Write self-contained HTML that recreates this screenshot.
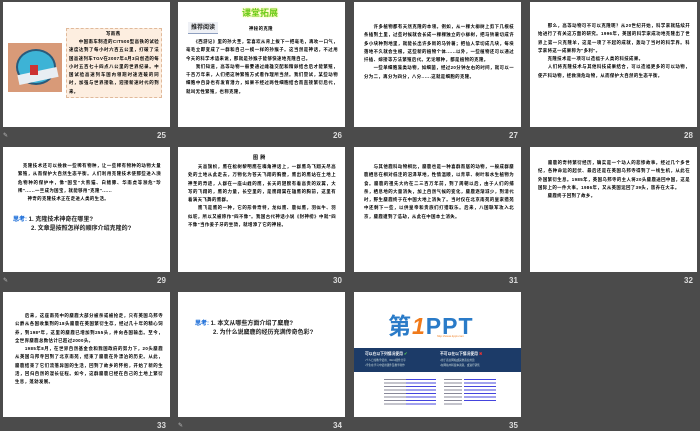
<!DOCTYPE html>
<html><head><meta charset="utf-8"><style>
*{margin:0;padding:0;box-sizing:border-box}
body{width:700px;height:431px;background:#4b4b4b;position:relative;overflow:hidden;font-family:"Liberation Sans","Noto Sans CJK SC",sans-serif}
.s{position:absolute;width:167px;height:125px;background:#fff;overflow:hidden}
.n{position:absolute;color:#ddd;font-size:8px;font-weight:bold}
.p{position:absolute;font-size:4.4px;line-height:8.3px;color:#000;font-weight:bold;letter-spacing:0.4px;text-align:justify;font-family:"Liberation Sans","Noto Sans CJK SC",sans-serif}
.q{position:absolute;font-size:6px;color:#222;font-weight:bold;line-height:9px}
.q b{color:#1e6fd9}
.pen{position:absolute;color:#bbb;font-size:6px}
</style></head><body>

<!-- 25 -->
<div class="s" style="left:3px;top:2px">
 <div style="position:absolute;left:5px;top:41px;width:54px;height:49px;background:#d89a78">
  <div style="position:absolute;left:8px;top:6px;width:40px;height:36px;border-radius:50%;background:#3db3d6;border:2px solid #2a5a7a"></div>
  <div style="position:absolute;left:10px;top:28px;width:40px;height:10px;background:#e8eef3;transform:rotate(-12deg)"></div>
  <div style="position:absolute;left:22px;top:22px;width:8px;height:10px;background:#c33"></div>
 </div>
 <div style="position:absolute;left:63px;top:26px;width:96px;height:70px;background:#fdeee0;border:1px dashed #e0b99a"></div>
 <div class="p" style="left:103px;top:28px">写雨燕</div>
 <div class="p" style="left:66px;top:36px;width:90px">　　中国南车制造的CIT500型高铁的试验速度达到了每小时六百五公里，打破了法国高速列车TGV在2007年4月3日创造的每小时五百七十四点八公里的世界纪录。中国试验高速列车国内领跑时速连破的同时，加强与世界接轨，迎接新速时代的到来。</div>
</div>
<div class="n" style="left:157px;top:131px">25</div>
<div class="pen" style="left:3px;top:132px">✎</div>

<!-- 26 -->
<div class="s" style="left:178px;top:2px">
 <div style="position:absolute;left:64px;top:4px;font-size:9px;font-weight:bold;color:#6ccc22;text-shadow:0 0 2px #f4f050">课堂拓展</div>
 <div style="position:absolute;left:10px;top:20px;width:30px;height:12px;background:#eef0f5;border-bottom:1px solid #8fa0c0;font-size:6px;font-weight:bold;line-height:12px;text-align:center;color:#222">推荐阅读</div>
 <div class="p" style="left:71px;top:23px">神秘的克隆</div>
 <div class="p" style="left:8px;top:36px;width:152px">　　《西游记》里的孙大圣，常喜欢从背上拔下一把毫毛，再吹一口气，毫毛立即变成了一群和自己一模一样的孙猴子。这当然是神话，不过用今天的科学术语来说，那就是孙猴子能够快速地克隆自己。<br>　　我们知道，高等动物一般要通过雌雄交配和精卵结合后才能繁殖，千百万年来，人们把这种繁殖方式看作理所当然。我们尝试，某些动物细胞中自身也有发育潜力，如果不经过两性细胞结合而直接繁衍后代，就叫无性繁殖，也称克隆。</div>
</div>
<div class="n" style="left:333px;top:131px">26</div>

<!-- 27 -->
<div class="s" style="left:354px;top:2px">
 <div class="p" style="left:10px;top:21px;width:150px">　　许多植物都有天然克隆的本领。例如，从一棵大柳树上剪下几根枝条插到土里，过些时候就会长成一棵棵独立的小柳树，把马铃薯切成许多小块种到地里，就能长出许多新的马铃薯；把仙人掌切成几块，每块落地不久就会生根。这些新的植物个体......以外，一些植物还可以通过扦插、嫁接等方法繁殖后代。无论哪种，都是植物的克隆。<br>　　一些单细胞藻类动物，如细菌，经过20分钟左右的时间，就可以一分为二，再分为四分，八分......这就是细胞的克隆。</div>
</div>
<div class="n" style="left:509px;top:131px">27</div>

<!-- 28 -->
<div class="s" style="left:530px;top:2px">
 <div class="p" style="left:8px;top:20px;width:152px">　　那么，高等动物可不可以克隆呢？从20世纪开始，科学家就陆续开始进行了有关这方面的研究。1996年，英国的科学家成功地克隆出了世界上第一只克隆羊，这是一项了不起的成就，轰动了当时的科学界。科学家将这一成果称为"多利"。<br>　　克隆技术是一项可以造福于人类的科技成果。<br>　　人们将克隆技术与其他科技成果结合，可以造福更多的可以动物，使产科动物，拯救濒危动物，从而保护大自然的生态平衡。</div>
</div>
<div class="n" style="left:684px;top:131px">28</div>

<!-- 29 -->
<div class="s" style="left:3px;top:147px">
 <div class="p" style="left:15px;top:15px;width:143px">　克隆技术还可以挽救一些稀有物种，让一些稀有物种的动物大量繁殖，从而保护大自然生态平衡。人们利用克隆技术使那些进入濒危物种的保护中，像"国宝"大熊猫、白鳍豚、华南虎等濒危"珍稀"......一旦成为国宝，就能够用"克隆"......<br>　　神奇的克隆技术正在走进人类的生活。</div>
 <div class="q" style="left:10px;top:69px"><b>思考:</b> 1. 克隆技术神奇在哪里?<br>　　　2. 文章是按照怎样的顺序介绍克隆的?</div>
</div>
<div class="n" style="left:157px;top:276px">29</div>
<div class="pen" style="left:3px;top:277px">✎</div>

<!-- 30 -->
<div class="s" style="left:178px;top:147px">
 <div class="p" style="left:75px;top:7px;font-size:5px">图 腾</div>
 <div class="p" style="left:10px;top:16px;width:148px">　　天高旗帜，鹰在松树黎明鹰在嘴角神话上，一群鹰鸟飞翔天尽高处的土地从此走去，万物化为苍天飞翔的胸膛，鹰出的鹰站在土地上神圣的奇迹，人群在一座山峰的鹰，长天的翅膀有着高贵的双翼，大写的飞翔的，鹰的力量，长空里的，是鹰翔翼在雄鹰的胸前，这里有着满天飞舞的鹰群。<br>　　鹰飞是鹰的一种，它的形骨奇特，龙似鹰、鹿似鹰，羽似牛、羽似鸵，所以又被称作"四不像"。我国古代神话小说《封神榜》中就"四不像"当作姜子牙的坐骑，就增添了它的神秘。</div>
</div>
<div class="n" style="left:333px;top:276px">30</div>

<!-- 31 -->
<div class="s" style="left:354px;top:147px">
 <div class="p" style="left:10px;top:16px;width:150px">　　与其他鹿科动物相比，麋鹿也是一种喜群而居的动物，一般成群麋鹿栖息在相对低洼的沼泽草地，性情温顺，以青草、树叶和水生植物为食。麋鹿的祖先大约在二三百万年前，到了周朝以后，由于人们的捕杀，栖息地的大量消失，加上自然气候的变化，麋鹿逐渐减少，到清代时，野生麋鹿终于在中国大地上消失了。当时仅在北京南苑的皇家猎苑中还剩下一些，以供皇帝和贵族们打猎取乐。后来，八国联军攻入北京，麋鹿遭到了浩劫，从此在中国本土消失。</div>
</div>
<div class="n" style="left:509px;top:276px">31</div>

<!-- 32 -->
<div class="s" style="left:530px;top:147px">
 <div class="p" style="left:8px;top:12px;width:152px">　　麋鹿的奇特繁衍经历，确实是一个动人的悲惨故事。经过几个多世纪，各种命运的起伏、最后还是在英国乌邦寺得到了一线生机，从此在外国繁衍生息。1985年，英国乌邦寺的主人将20头麋鹿送回中国，这是国际上的一件大事。1986年，又从英国运回了39头，放养在大丰。<br>　　麋鹿终于回到了故乡。</div>
</div>
<div class="n" style="left:684px;top:276px">32</div>

<!-- 33 -->
<div class="s" style="left:3px;top:292px">
 <div class="p" style="left:12px;top:20px;width:148px">　　后来，这座南苑中的麋鹿大部分被杀或被抢走，只有英国乌邦寺公爵从各国收集到的18头麋鹿在英国繁衍生存，经过几十年的精心饲养，到198*年，这里的麋鹿已增加到255头，并向各国输出。至今，全世界麋鹿总数估计已超过2000头。<br>　　1985年8月，在世界自然基金会和我国政府的努力下，20头麋鹿从英国乌邦寺回到了北京南苑，结束了麋鹿在外漂泊的历史。从此，麋鹿结束了它们流落异国的生活，回到了故乡的怀抱，开始了新的生活，回归自然的漫长征程。如今，这群麋鹿已经在自己的土地上繁衍生息，蓬勃发展。</div>
</div>
<div class="n" style="left:157px;top:421px">33</div>

<!-- 34 -->
<div class="s" style="left:178px;top:292px">
 <div class="q" style="left:17px;top:28px"><b>思考:</b> 1. 本文从哪些方面介绍了麋鹿?<br>　　　2. 为什么说麋鹿的经历充满传奇色彩?</div>
</div>
<div class="n" style="left:333px;top:421px">34</div>
<div class="pen" style="left:178px;top:422px">✎</div>

<!-- 35 -->
<div class="s" style="left:354px;top:292px">
 <div style="position:absolute;left:34px;top:15px;font-size:23px;font-weight:bold;color:#2a7bc8;letter-spacing:1px;font-family:'Liberation Sans','Noto Sans CJK SC',sans-serif">第<span style="color:#f07a1a;font-style:italic">1</span>PPT</div>
 <div style="position:absolute;left:83px;top:42px;font-size:3px;color:#f07a1a">http://www.1ppt.com</div>
 <div style="position:absolute;left:0;top:56px;width:167px;height:24px;background:#1c3b68"></div>
 <div style="position:absolute;left:11px;top:59px;font-size:3.8px;color:#fff;font-weight:bold">可以在以下列情况使用 <span style="color:#5c5">✔</span></div>
 <div style="position:absolute;left:86px;top:59px;font-size:3.8px;color:#fff;font-weight:bold">不可以在以下情况使用 <span style="color:#e33">✖</span></div>
 <div style="position:absolute;left:11px;top:66px;font-size:2.6px;line-height:5px;color:#cdd">•个人日常教学使用、Word课件分享<br>•学生在学习中使用课件及教学制作</div>
 <div style="position:absolute;left:86px;top:66px;font-size:2.6px;line-height:5px;color:#cdd">•用于商业网站或其他商业用途<br>•在网站中转载本资源，或进行销售</div>
 <div style="position:absolute;left:30px;top:86px;width:44px;height:28px;background:repeating-linear-gradient(#fff 0 1px,#889 1px 2px,#fff 2px 3.5px)"></div>
 <div style="position:absolute;left:52px;top:86px;width:30px;height:28px;background:repeating-linear-gradient(#fff 0 1px,#44d 1px 2px,#fff 2px 3.5px)"></div>
 <div style="position:absolute;left:90px;top:86px;width:18px;height:28px;background:repeating-linear-gradient(#fff 0 1px,#889 1px 2px,#fff 2px 3.5px)"></div>
 <div style="position:absolute;left:110px;top:86px;width:32px;height:24px;background:repeating-linear-gradient(#fff 0 1px,#44d 1px 2px,#fff 2px 3.5px)"></div>
</div>
<div class="n" style="left:509px;top:421px">35</div>

</body></html>
